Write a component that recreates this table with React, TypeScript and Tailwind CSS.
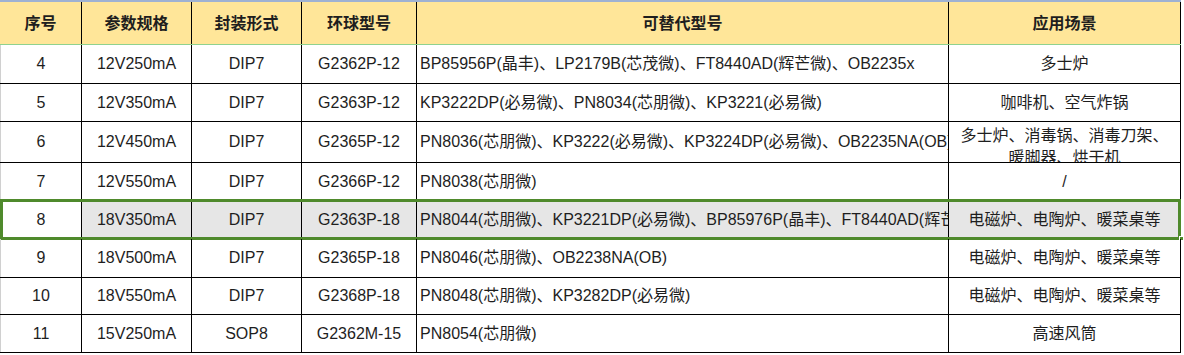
import React from "react";

const cols = "grid-cols-[82px_110px_110px_115px_532px_232px]";

type Row = { n: string; spec: string; pkg: string; model: string; alt: string; app: string[]; h: string; sel?: boolean };

const rows: Row[] = [
  { n: "4", spec: "12V250mA", pkg: "DIP7", model: "G2362P-12", alt: "BP85956P(晶丰)、LP2179B(芯茂微)、FT8440AD(辉芒微)、OB2235x", app: ["多士炉"], h: "h-[39px]" },
  { n: "5", spec: "12V350mA", pkg: "DIP7", model: "G2363P-12", alt: "KP3222DP(必易微)、PN8034(芯朋微)、KP3221(必易微)", app: ["咖啡机、空气炸锅"], h: "h-[38px]" },
  { n: "6", spec: "12V450mA", pkg: "DIP7", model: "G2365P-12", alt: "PN8036(芯朋微)、KP3222(必易微)、KP3224DP(必易微)、OB2235NA(OB)", app: ["多士炉、消毒锅、消毒刀架、", "暖脚器、烘干机"], h: "h-[41px]" },
  { n: "7", spec: "12V550mA", pkg: "DIP7", model: "G2366P-12", alt: "PN8038(芯朋微)", app: ["/"], h: "h-[38px]" },
  { n: "8", spec: "18V350mA", pkg: "DIP7", model: "G2363P-18", alt: "PN8044(芯朋微)、KP3221DP(必易微)、BP85976P(晶丰)、FT8440AD(辉芒微)", app: ["电磁炉、电陶炉、暖菜桌等"], h: "h-[38px]", sel: true },
  { n: "9", spec: "18V500mA", pkg: "DIP7", model: "G2365P-18", alt: "PN8046(芯朋微)、OB2238NA(OB)", app: ["电磁炉、电陶炉、暖菜桌等"], h: "h-[39px]" },
  { n: "10", spec: "18V550mA", pkg: "DIP7", model: "G2368P-18", alt: "PN8048(芯朋微)、KP3282DP(必易微)", app: ["电磁炉、电陶炉、暖菜桌等"], h: "h-[37px]" },
  { n: "11", spec: "15V250mA", pkg: "SOP8", model: "G2362M-15", alt: "PN8054(芯朋微)", app: ["高速风筒"], h: "h-[38px]" },
];

const font = "font-['Liberation_Sans','Noto_Sans_CJK_SC',sans-serif]";

export default function App() {
  return (
    <div className={`w-[1184px] h-[355px] bg-white overflow-hidden text-[16px] text-[#1e1e1e] ${font}`}>
      <div className="w-[1181px]">
        {/* header */}
        <div className={`grid ${cols} h-[45px] bg-[#FFE699] border-t-[2px] border-t-[#9fb2d2] border-b border-b-[#8fd28f] font-bold`}>
          {["序号", "参数规格", "封装形式", "环球型号", "可替代型号", "应用场景"].map((t) => (
            <div key={t} className="flex items-center justify-center border-r border-black pt-[2px]">
              {t}
            </div>
          ))}
        </div>
        {rows.map((r) => (
          <div key={r.n} className="relative">
            <div className={`grid ${cols} ${r.h} border-b border-black ${r.sel ? "bg-[#e6e6e6]" : ""}`}>
              <div className={`flex items-center justify-center border-r border-black border-l border-l-[#d0d0d0] ${r.sel ? "bg-white" : ""}`}>{r.n}</div>
              <div className="flex items-center justify-center border-r border-black">{r.spec}</div>
              <div className="flex items-center justify-center border-r border-black">{r.pkg}</div>
              <div className="flex items-center justify-center border-r border-black">{r.model}</div>
              <div className="flex items-center border-r border-black pl-[3px] overflow-hidden whitespace-nowrap">{r.alt}</div>
              {r.app.length > 1 ? (
                <div className="flex flex-col items-center justify-start pt-[3px] border-r border-black overflow-hidden leading-[22px] text-center">
                  {r.app.map((a) => (
                    <div key={a} className="whitespace-nowrap shrink-0">{a}</div>
                  ))}
                </div>
              ) : (
                <div className="flex items-center justify-center border-r border-black overflow-hidden text-center whitespace-nowrap">
                  {r.app[0]}
                </div>
              )}
            </div>
            {r.sel && (
              <>
                <div className="absolute left-0 top-[-2px] w-[1181px] h-[41px] border-[3px] border-[#4f8a2c] pointer-events-none" />
                <div className="absolute left-[1179px] top-[35px] w-[5px] h-[5px] bg-[#4f8a2c] border border-white" />
              </>
            )}
          </div>
        ))}
      </div>
    </div>
  );
}
